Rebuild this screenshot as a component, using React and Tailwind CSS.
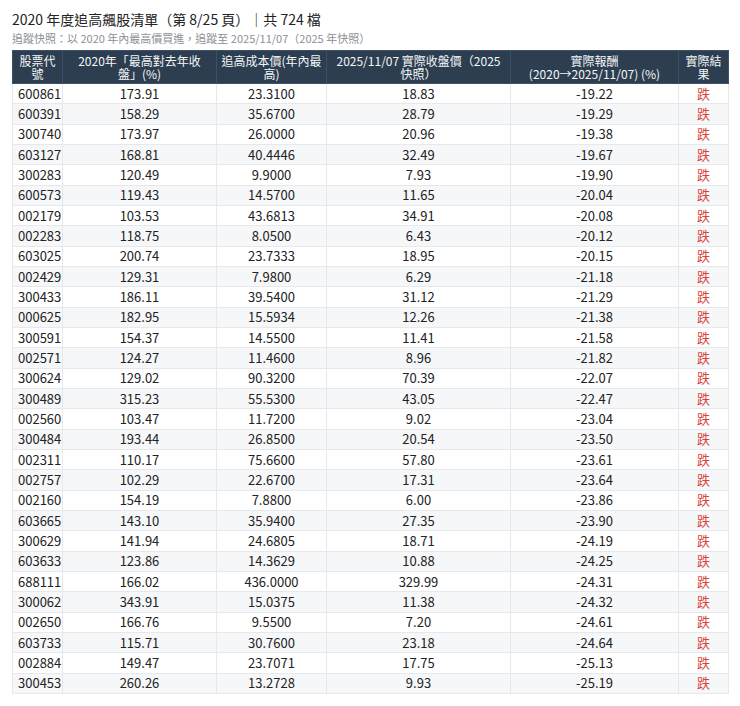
const rows = [
  ['600861', '173.91', '23.3100', '18.83', '-19.22'],
  ['600391', '158.29', '35.6700', '28.79', '-19.29'],
  ['300740', '173.97', '26.0000', '20.96', '-19.38'],
  ['603127', '168.81', '40.4446', '32.49', '-19.67'],
  ['300283', '120.49', '9.9000', '7.93', '-19.90'],
  ['600573', '119.43', '14.5700', '11.65', '-20.04'],
  ['002179', '103.53', '43.6813', '34.91', '-20.08'],
  ['002283', '118.75', '8.0500', '6.43', '-20.12'],
  ['603025', '200.74', '23.7333', '18.95', '-20.15'],
  ['002429', '129.31', '7.9800', '6.29', '-21.18'],
  ['300433', '186.11', '39.5400', '31.12', '-21.29'],
  ['000625', '182.95', '15.5934', '12.26', '-21.38'],
  ['300591', '154.37', '14.5500', '11.41', '-21.58'],
  ['002571', '124.27', '11.4600', '8.96', '-21.82'],
  ['300624', '129.02', '90.3200', '70.39', '-22.07'],
  ['300489', '315.23', '55.5300', '43.05', '-22.47'],
  ['002560', '103.47', '11.7200', '9.02', '-23.04'],
  ['300484', '193.44', '26.8500', '20.54', '-23.50'],
  ['002311', '110.17', '75.6600', '57.80', '-23.61'],
  ['002757', '102.29', '22.6700', '17.31', '-23.64'],
  ['002160', '154.19', '7.8800', '6.00', '-23.86'],
  ['603665', '143.10', '35.9400', '27.35', '-23.90'],
  ['300629', '141.94', '24.6805', '18.71', '-24.19'],
  ['603633', '123.86', '14.3629', '10.88', '-24.25'],
  ['688111', '166.02', '436.0000', '329.99', '-24.31'],
  ['300062', '343.91', '15.0375', '11.38', '-24.32'],
  ['002650', '166.76', '9.5500', '7.20', '-24.61'],
  ['603733', '115.71', '30.7600', '23.18', '-24.64'],
  ['002884', '149.47', '23.7071', '17.75', '-25.13'],
  ['300453', '260.26', '13.2728', '9.93', '-25.19'],
];

const th = 'border border-[#3d5068] py-0 font-normal leading-[13px] text-center align-middle';
const td = 'border border-[#e6e8ec] px-[5px] py-0 h-[20.33px] leading-[16px] text-center';

export default function App() {
  return (
    <div
      className="bg-white px-3 pt-[9px] pb-4 text-[#222]"
      style={{ fontFamily: '"Noto Sans CJK TC", "Noto Sans", sans-serif' }}
    >
      <h1 className="text-[14px] leading-[20px] font-normal text-[#222]">
        2020 年度追高飆股清單（第 8/25 頁）｜共 724 檔
      </h1>
      <p className="mt-[1px] text-[11px] leading-[16px] text-[#8a8f96]">
        追蹤快照：以 2020 年內最高價買進，追蹤至 2025/11/07（2025 年快照）
      </p>
      <table className="mt-[4px] w-[716px] table-fixed border-collapse text-[13px]">
        <colgroup>
          <col className="w-[50px]" />
          <col className="w-[154px]" />
          <col className="w-[110px]" />
          <col className="w-[184px]" />
          <col className="w-[168px]" />
          <col className="w-[50px]" />
        </colgroup>
        <thead>
          <tr className="h-[33px] bg-[#2c3e50] text-[#f4f6f8] text-[12px]">
            <th className={`${th} px-1`}>股票代號</th>
            <th className={`${th} px-[10px]`}>2020年「最高對去年收盤」(%)</th>
            <th className={`${th} px-1`}>追高成本價(年內最高)</th>
            <th className={`${th} px-1`}>2025/11/07 實際收盤價（2025 快照）</th>
            <th className={`${th} px-1`}>
              實際報酬
              <br />
              (2020→2025/11/07) (%)
            </th>
            <th className={`${th} px-1`}>實際結果</th>
          </tr>
        </thead>
        <tbody>
          {rows.map((r, i) => (
            <tr key={r[0]} className={i % 2 === 1 ? 'bg-[#f6f7f9]' : 'bg-white'}>
              <td className={`${td} text-left`}>{r[0]}</td>
              <td className={td}>{r[1]}</td>
              <td className={td}>{r[2]}</td>
              <td className={td}>{r[3]}</td>
              <td className={td}>{r[4]}</td>
              <td className={`${td} text-[#d9443a]`}>跌</td>
            </tr>
          ))}
        </tbody>
      </table>
    </div>
  );
}
